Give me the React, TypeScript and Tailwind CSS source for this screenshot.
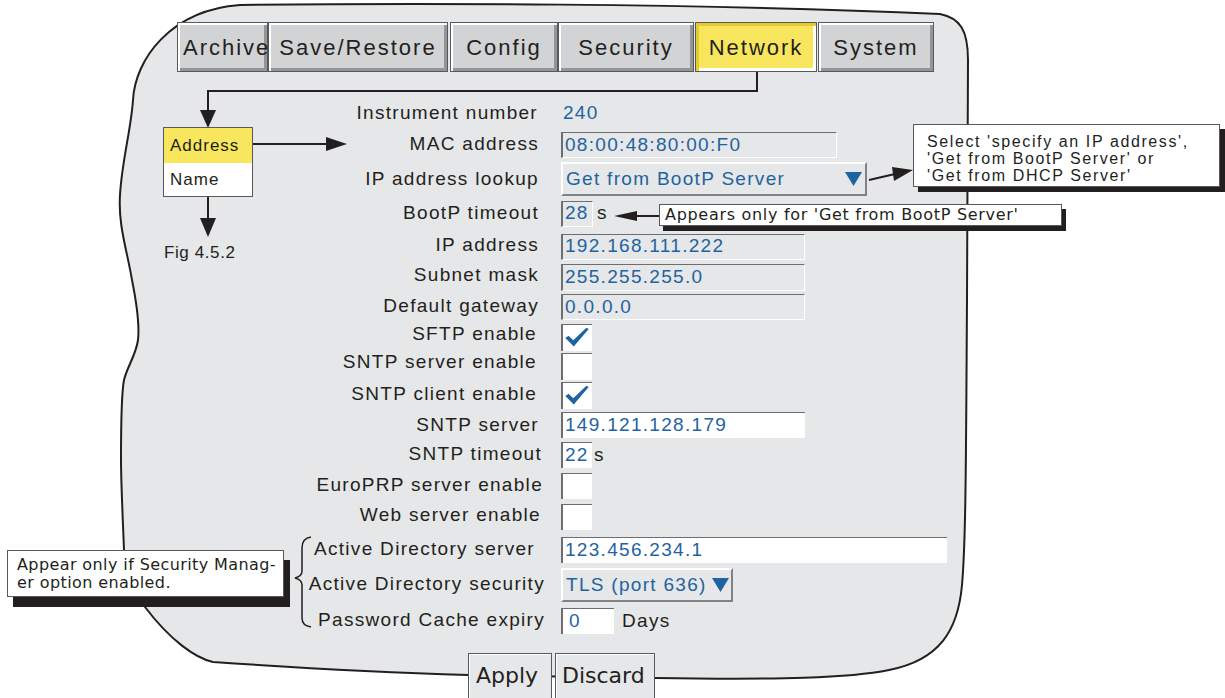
import React from 'react';

const BLUE = 'text-[#1f63a0]';

const Tick = () => (
  <svg width="31" height="26" viewBox="0 0 31 26">
    <path d="M2.5 13 L6 10.5 L11 15.5 L25 2 L27.5 3.5 L11.5 22 Z" fill="#1f63a0" />
  </svg>
);

const Tri = () => (
  <svg width="17" height="14" viewBox="0 0 17 14">
    <polygon points="0,0 17,0 8.5,14" fill="#1f63a0" />
  </svg>
);

const Row: React.FC<{ label: string; h: string; pr?: string; lb?: string; children?: React.ReactNode }> = ({
  label,
  h,
  pr = 'pr-[22px]',
  lb = '',
  children,
}) => (
  <div className={`flex items-center ${h}`}>
    <div className={`w-[308px] shrink-0 text-right whitespace-nowrap ${pr} ${lb}`}>{label}</div>
    <div className="flex items-center">{children}</div>
  </div>
);

const GreyBox: React.FC<{ w: string; h?: string; children?: React.ReactNode }> = ({ w, h = 'h-[26px]', children }) => (
  <div
    className={`${w} ${h} flex items-center pl-[2px] bg-[#e6e7e8] border-l-2 border-t border-r border-b border-l-[#6d6e71] border-t-[#6d6e71] border-r-white border-b-white ${BLUE}`}
  >
    {children}
  </div>
);

const WhiteBox: React.FC<{ w: string; h?: string; children?: React.ReactNode }> = ({ w, h = 'h-[26px]', children }) => (
  <div
    className={`${w} ${h} flex items-center pl-[2px] bg-white border-l-2 border-t border-l-[#6d6e71] border-t-[#6d6e71] ${BLUE}`}
  >
    {children}
  </div>
);

const Check: React.FC<{ on?: boolean; h?: string }> = ({ on, h = 'h-[27px]' }) => (
  <div className={`w-[31px] ${h} bg-white border-l-2 border-t border-l-[#6d6e71] border-t-[#6d6e71] flex items-center`}>
    {on && <Tick />}
  </div>
);

const Tab: React.FC<{ w: string; active?: boolean; left?: boolean; children: React.ReactNode }> = ({
  w,
  active,
  left,
  children,
}) => (
  <div
    className={`${w} h-[50px] flex items-center border border-[#58595b] ${
      left ? 'justify-start pl-[5px]' : 'justify-center'
    } ${
      active
        ? 'bg-[#f8e65e] shadow-[inset_3px_3px_0_#e2cd2c,inset_-3px_-3px_0_#ffffff]'
        : 'bg-[#d1d3d4] shadow-[inset_2px_2px_0_#ffffff,inset_-3px_-3px_0_#939598]'
    }`}
  >
    {children}
  </div>
);

export default function App() {
  return (
    <div className="relative w-[1225px] h-[698px] overflow-hidden bg-white font-['Liberation_Sans',Arial,sans-serif] text-[#231f20]">
      {/* panel outline, connectors and arrows */}
      <svg className="absolute inset-0" width="1225" height="698" viewBox="0 0 1225 698">
        <path
          d="M 240 5 C 400 3, 700 3, 940 14 C 960 18, 968 30, 968 60 L 967 300 C 966 450, 966 540, 962 585 C 958 630, 940 660, 889 670 C 850 678, 780 680, 655 678 L 468 675 C 400 673, 300 668, 213 662 C 195 658, 170 640, 145 607 C 130 585, 124 570, 124 550 C 122 500, 121 480, 121 460 C 121 430, 121 395, 124 380 C 127 367, 136 355, 138 340 C 140 322, 136 300, 132 280 C 127 250, 118 225, 120 195 C 122 160, 131 130, 133 100 C 135 60, 170 10, 240 5 Z"
          fill="#e6e7e8"
          stroke="#231f20"
          strokeWidth="2"
        />
        <g stroke="#231f20" strokeWidth="2" fill="none">
          <polyline points="757,72 757,91 208,91 208,112" />
          <line x1="253" y1="144" x2="328" y2="144" />
          <line x1="208" y1="196" x2="208" y2="220" />
          <line x1="659" y1="216" x2="634" y2="216" />
          <line x1="869" y1="180" x2="895" y2="174" />
          <path d="M 311 537 C 304 538, 302 542, 302 548 L 302 571 C 302 575, 299 577, 295 578 C 299 579, 302 581, 302 585 L 302 618 C 302 623, 304 626, 311 627" strokeWidth="1.5" />
        </g>
        <g fill="#231f20">
          <polygon points="200,110 216,110 208,128" />
          <polygon points="326,137 326,151 347,144" />
          <polygon points="200,218 216,218 208,237" />
          <polygon points="637,211 637,221 614,216" />
          <polygon points="894,181 892,167 913,170" />
        </g>
      </svg>

      <div className="relative flex flex-col">
        {/* tabs */}
        <div className="flex pt-[22px] pl-[177px] text-[22px] tracking-[2px]">
          <Tab w="w-[91px]" left>Archive</Tab>
          <Tab w="w-[180px]">Save/Restore</Tab>
          <div className="w-[2px]" />
          <Tab w="w-[108px]">Config</Tab>
          <Tab w="w-[136px]">Security</Tab>
          <div className="w-[1px]" />
          <Tab w="w-[122px]" active>Network</Tab>
          <div className="w-[1px]" />
          <Tab w="w-[116px]">System</Tab>
        </div>

        {/* body */}
        <div className="flex pl-[163px] mt-[26px]">
          <div className="w-[90px] shrink-0 flex flex-col pt-[29px]">
            <div className="border border-[#58595b] text-[17px] tracking-[1px]">
              <div className="h-[35px] bg-[#f8e65e] flex items-center pl-[6px]">Address</div>
              <div className="h-[33px] bg-white flex items-center pl-[6px]">Name</div>
            </div>
            <div className="mt-[43px] ml-[1px] text-[17px] tracking-[0.6px] whitespace-nowrap">Fig 4.5.2</div>
          </div>

          <div className="flex flex-col text-[19px] tracking-[1.3px]">
            <Row label="Instrument number" h="h-[30px]" pr="pr-[23px]">
              <span className={`pl-[2px] ${BLUE}`}>240</span>
            </Row>
            <Row label="MAC address" h="h-[34px]" lb="pb-[2px]">
              <GreyBox w="w-[276px]" h="h-[26px]">08:00:48:80:00:F0</GreyBox>
            </Row>
            <Row label="IP address lookup" h="h-[34px]">
              <div
                className={`w-[306px] h-[34px] flex items-center justify-between pl-[3px] pr-[3px] bg-[#e6e7e8] border-l-2 border-t-2 border-r-2 border-b-2 border-l-white border-t-white border-r-[#808285] border-b-[#808285] ${BLUE}`}
              >
                <span>Get from BootP Server</span>
                <Tri />
              </div>
            </Row>
            <Row label="BootP timeout" h="h-[35px]">
              <GreyBox w="w-[32px]" h="h-[26px]">28</GreyBox>
              <span className="ml-[4px]">s</span>
            </Row>
            <Row label="IP address" h="h-[31px]" lb="pb-[2px]">
              <GreyBox w="w-[244px]">192.168.111.222</GreyBox>
            </Row>
            <Row label="Subnet mask" h="h-[30px]" lb="pb-[4px]">
              <GreyBox w="w-[244px]" h="h-[27px]">255.255.255.0</GreyBox>
            </Row>
            <Row label="Default gateway" h="h-[30px]" lb="pb-[2px]">
              <GreyBox w="w-[244px]">0.0.0.0</GreyBox>
            </Row>
            <Row label="SFTP enable" h="h-[30px]" pr="pr-[24px]" lb="pb-[6px]">
              <Check on />
            </Row>
            <Row label="SNTP server enable" h="h-[29px]" pr="pr-[24px]" lb="pb-[8px]">
              <Check />
            </Row>
            <Row label="SNTP client enable" h="h-[29px]" pr="pr-[24px]" lb="pb-[2px]">
              <Check on />
            </Row>
            <Row label="SNTP server" h="h-[30px]">
              <WhiteBox w="w-[244px]">149.121.128.179</WhiteBox>
            </Row>
            <Row label="SNTP timeout" h="h-[30px]" pr="pr-[19px]" lb="pb-[2px]">
              <WhiteBox w="w-[31px]">22</WhiteBox>
              <span className="ml-[2px]">s</span>
            </Row>
            <Row label="EuroPRP server enable" h="h-[31px]" pr="pr-[18px]">
              <Check h="h-[26px]" />
            </Row>
            <Row label="Web server enable" h="h-[32px]" pr="pr-[20px]" lb="pb-[4px]">
              <Check h="h-[26px]" />
            </Row>
            <Row label="Active Directory server" h="h-[34px]" pr="pr-[26px]" lb="pb-[2px]">
              <WhiteBox w="w-[386px]">123.456.234.1</WhiteBox>
            </Row>
            <Row label="Active Directory security" h="h-[36px]" pr="pr-[16px]" lb="pb-[2px]">
              <div
                className={`w-[172px] h-[34px] flex items-center gap-[5px] pl-[3px] bg-[#e6e7e8] border-l-2 border-t-2 border-r-2 border-b-2 border-l-white border-t-white border-r-[#808285] border-b-[#808285] ${BLUE}`}
              >
                <span className="whitespace-nowrap">TLS (port 636)</span>
                <Tri />
              </div>
            </Row>
            <Row label="Password Cache expiry" h="h-[36px]" pr="pr-[16px]" lb="pb-[2px]">
              <WhiteBox w="w-[53px]">
                <span className="pl-[4px]">0</span>
              </WhiteBox>
              <span className="ml-[8px]">Days</span>
            </Row>
          </div>
        </div>

        {/* bottom buttons */}
        <div className="flex pl-[468px] mt-[14px] font-['DejaVu_Sans',sans-serif] text-[22px]">
          <div className="w-[84px] h-[50px] pl-[7px] pt-[5px] bg-[#e6e7e8] border border-[#58595b] shadow-[inset_1px_1px_0_#ffffff]">
            Apply
          </div>
          <div className="w-[3px]" />
          <div className="w-[100px] h-[50px] pl-[6px] pt-[5px] bg-[#e6e7e8] border border-[#58595b] shadow-[inset_1px_1px_0_#ffffff]">
            Discard
          </div>
        </div>
      </div>

      {/* callouts */}
      <div className="absolute left-[913px] top-[124px] w-[307px] h-[63px] bg-white border border-[#58595b] shadow-[5px_5px_0_#231f20] pl-[13px] pt-[8px] text-[16px] leading-[17px] tracking-[1.6px] whitespace-nowrap">
        Select 'specify an IP address',
        <br />
        'Get from BootP Server' or
        <br />
        'Get from DHCP Server'
      </div>

      <div className="absolute left-[659px] top-[204px] w-[403px] h-[22px] bg-white border border-[#58595b] shadow-[4px_5px_0_#231f20] pl-[5px] flex items-center font-['DejaVu_Sans',sans-serif] text-[16px] tracking-[0.7px] whitespace-nowrap">
        Appears only for 'Get from BootP Server'
      </div>

      <div className="absolute left-[7px] top-[550px] w-[277px] h-[47px] bg-white border border-[#58595b] shadow-[6px_10px_0_#231f20] pl-[9px] pt-[5px] font-['DejaVu_Sans',sans-serif] text-[16px] leading-[18px] tracking-[0.4px] whitespace-nowrap">
        Appear only if Security Manag-
        <br />
        er option enabled.
      </div>
    </div>
  );
}
